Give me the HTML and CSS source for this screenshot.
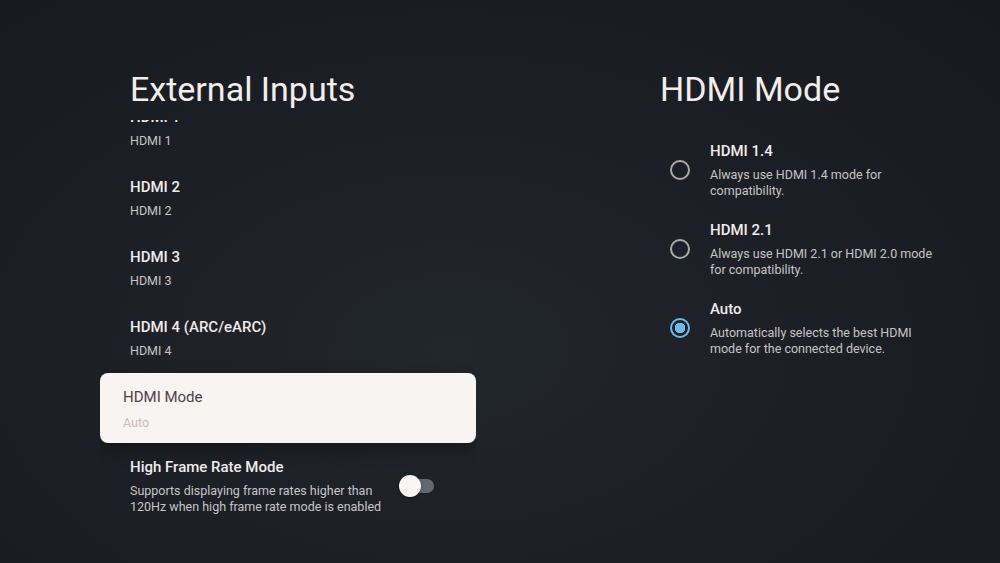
FILE: index.html
```html
<!DOCTYPE html>
<html lang="en">
<head>
  <meta charset="UTF-8">
  <meta name="viewport" content="width=device-width, initial-scale=1.0">
  <title>External Inputs</title>
  <link rel="stylesheet" href="styles.css">
</head>
<body>
  <div class="screen">
    <section class="inputs">
      <h1 class="page-title">External Inputs</h1>
      <div class="list">
        <div class="list-inner">
          <div class="item">
            <div class="item-title">HDMI 1</div>
            <div class="item-sub">HDMI 1</div>
          </div>
          <div class="item">
            <div class="item-title">HDMI 2</div>
            <div class="item-sub">HDMI 2</div>
          </div>
          <div class="item">
            <div class="item-title">HDMI 3</div>
            <div class="item-sub">HDMI 3</div>
          </div>
          <div class="item">
            <div class="item-title">HDMI 4 (ARC/eARC)</div>
            <div class="item-sub">HDMI 4</div>
          </div>
          <div class="item focused">
            <div class="item-title">HDMI Mode</div>
            <div class="item-sub">Auto</div>
          </div>
          <div class="item switch-row">
            <div class="switch-text">
              <div class="item-title">High Frame Rate Mode</div>
              <div class="item-sub">Supports displaying frame rates higher than 120Hz when high frame rate mode is enabled</div>
            </div>
            <div class="toggle">
              <span class="toggle-track"></span>
              <span class="toggle-knob"></span>
            </div>
          </div>
        </div>
      </div>
    </section>

    <section class="mode-panel">
      <h1 class="page-title">HDMI Mode</h1>
      <div class="options">
        <div class="option">
          <span class="radio"></span>
          <div class="option-text">
            <div class="item-title">HDMI 1.4</div>
            <div class="item-sub">Always use HDMI 1.4 mode for compatibility.</div>
          </div>
        </div>
        <div class="option">
          <span class="radio"></span>
          <div class="option-text">
            <div class="item-title">HDMI 2.1</div>
            <div class="item-sub">Always use HDMI 2.1 or HDMI 2.0 mode for compatibility.</div>
          </div>
        </div>
        <div class="option">
          <span class="radio checked"></span>
          <div class="option-text">
            <div class="item-title">Auto</div>
            <div class="item-sub">Automatically selects the best HDMI mode for the connected device.</div>
          </div>
        </div>
      </div>
    </section>
  </div>
</body>
</html>
```

FILE: styles.css
```css
html, body {
  margin: 0;
  padding: 0;
}

body {
  font-family: Roboto, "Liberation Sans", sans-serif;
  background: radial-gradient(ellipse at 45% 62%, #22262d 0%, #1b1e24 55%, #17191e 100%);
  color: #f1ece9;
  width: 1000px;
  height: 563px;
  overflow: hidden;
}

.screen {
  display: flex;
  padding: 69px 0 0 100px;
  gap: 184px;
}

.page-title {
  margin: 0;
  font-size: 34px;
  line-height: 40px;
  font-weight: 400;
  color: #f3eeeb;
}

/* left column */
.inputs {
  width: 376px;
}

.inputs .page-title {
  padding-left: 30px;
}

.list {
  margin-top: 11px;
  height: 420px;
  overflow: hidden;
}

.list-inner {
  margin-top: -27px;
}

.item {
  padding: 14px 30px;
  height: 42px;
}

.item-title {
  font-size: 15px;
  line-height: 20px;
  font-weight: 500;
  color: #f1ece9;
}

.item-sub {
  margin-top: 6px;
  font-size: 12.5px;
  line-height: 15.5px;
  color: #c9c5c3;
}

.focused {
  background: #f8f4f2;
  border-radius: 8px;
  padding-left: 23px;
  box-shadow: 0 6px 16px rgba(0, 0, 0, 0.35);
}

.focused .item-title {
  font-weight: 400;
  color: #523c4c;
}

.focused .item-sub {
  margin-top: 8px;
  color: #c8b9c1;
}

.switch-row {
  display: flex;
  align-items: center;
  height: auto;
  padding-right: 41px;
}

.switch-text {
  width: 262px;
}

.toggle {
  position: relative;
  width: 36px;
  height: 22px;
  margin-left: auto;
}

.toggle-track {
  position: absolute;
  left: 5px;
  top: 4px;
  width: 30px;
  height: 14px;
  border-radius: 7px;
  background: #63676f;
}

.toggle-knob {
  position: absolute;
  left: 0;
  top: 0;
  width: 22px;
  height: 22px;
  border-radius: 50%;
  background: #faf6f4;
  box-shadow: 0 1px 3px rgba(0, 0, 0, 0.4);
}

/* right panel */
.options {
  margin-top: 32px;
  display: flex;
  flex-direction: column;
  gap: 21px;
}

.option {
  display: flex;
  align-items: center;
  gap: 20px;
  padding-left: 10px;
}

.option-text {
  width: 232px;
}

.option .item-sub {
  line-height: 16px;
}

.radio {
  width: 16px;
  height: 16px;
  border: 2px solid #aea9a4;
  border-radius: 50%;
  flex-shrink: 0;
}

.radio.checked {
  border-color: #6cbaec;
  background: radial-gradient(circle, #6cbaec 0, #6cbaec 5px, transparent 5.5px);
}
```
